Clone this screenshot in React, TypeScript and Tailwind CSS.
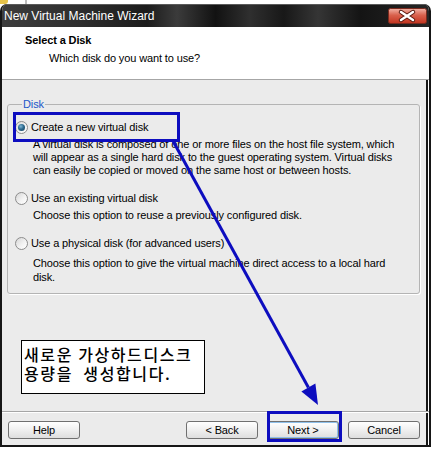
import React from "react";

function Radio({ checked }: { checked?: boolean }) {
	return (
		<span className="flex h-[13px] w-[13px] shrink-0 items-center justify-center rounded-full border border-[#8c8c8c] bg-[linear-gradient(135deg,#d6d6d6_0%,#f4f4f4_60%,#ffffff_100%)]">
			{checked && (
				<span className="h-[7px] w-[7px] rounded-full bg-[radial-gradient(circle_at_40%_35%,#7fb6d6_0%,#2d6a8e_45%,#163e58_100%)]" />
			)}
		</span>
	);
}

function Btn({ label, primary }: { label: string; primary?: boolean }) {
	return (
		<button
			className={
				"h-[18px] w-[72px] rounded-[3px] border border-[#707070] bg-[linear-gradient(180deg,#ffffff_0%,#f1f1f1_45%,#dedede_100%)] text-[11px] leading-[16px] text-black " +
				(primary ? "shadow-[inset_0_0_0_1px_#8fc0ea]" : "")
			}
		>
			{label}
		</button>
	);
}

export default function App() {
	return (
		<div className="relative h-[450px] w-[431px] overflow-hidden bg-white font-['Liberation_Sans',Arial,sans-serif] text-[11px] tracking-[-0.12px] text-black">
			{/* desktop behind the window */}
			<div className="flex h-[4px]">
				<div className="h-[4px] w-[8px] rounded-br-[3px] bg-[#e6c34a]" />
				<div className="ml-[17px] w-[2px] bg-[#bdbdbd]" />
			</div>

			{/* window */}
			<div className="w-[431px] overflow-hidden rounded-t-[7px] border-x-2 border-b-2 border-[#161616]">
				{/* title bar */}
				<div className="flex h-[23px] items-center justify-between bg-[linear-gradient(90deg,#3d3d3d_0%,#2e2e2e_18%,#1c1c1c_34%,#3b3b3b_41%,#121212_50%,#2f2f2f_58%,#181818_66%,#353535_74%,#141414_84%,#262626_100%)] pl-[2px] pr-[2px] shadow-[inset_0_1px_0_#5a5a5a]">
					<span className="text-[12px] tracking-normal text-white">New Virtual Machine Wizard</span>
					<svg width="39" height="16" viewBox="0 0 39 16">
						<defs>
							<linearGradient id="cl" x1="0" y1="0" x2="0" y2="1">
								<stop offset="0" stopColor="#f2b3a6" />
								<stop offset="0.45" stopColor="#d9604c" />
								<stop offset="1" stopColor="#c2341f" />
							</linearGradient>
						</defs>
						<rect x="0.5" y="0.5" width="38" height="15" rx="2" fill="url(#cl)" stroke="#7a2a1e" />
						<path d="M13 4 L25 12 M25 4 L13 12" stroke="#5a1a10" strokeWidth="4.5" strokeLinecap="round" />
						<path d="M13 4 L25 12 M25 4 L13 12" stroke="#ffffff" strokeWidth="2.5" strokeLinecap="round" />
					</svg>
				</div>

				{/* header */}
				<div className="h-[53px] border-b border-[#a6a6a6] bg-white pl-[23px] pt-[7px]">
					<div className="text-[11px] font-bold leading-[13px]">Select a Disk</div>
					<div className="mt-[5px] pl-[24px] leading-[13px]">Which disk do you want to use?</div>
				</div>

				{/* body */}
				<div className="flex h-[365px] flex-col bg-[#ebebeb] shadow-[inset_-1px_0_0_#ffffff,inset_-3px_0_0_#161616]">
					<fieldset className="ml-[5px] mt-[18px] w-[413px] rounded-[3px] border border-[#b4b4b4] pb-[9px] pl-[7px] shadow-[1px_1px_0_#ffffff]">
						<legend className="ml-[7px] px-[1px] leading-[13px] text-[#2157c9]">Disk</legend>

						<div className="mt-[10px] flex h-[13px] items-center gap-[3px] leading-[13px]">
							<Radio checked />
							<span>Create a new virtual disk</span>
						</div>
						<div className="mt-[4px] whitespace-nowrap pl-[18px] leading-[13px]">
							A virtual disk is composed of one or more files on the host file system, which
							<br />
							will appear as a single hard disk to the guest operating system. Virtual disks
							<br />
							can easily be copied or moved on the same host or between hosts.
						</div>

						<div className="mt-[15px] flex h-[13px] items-center gap-[3px] leading-[13px]">
							<Radio />
							<span>Use an existing virtual disk</span>
						</div>
						<div className="mt-[4px] pl-[18px] leading-[13px]">
							Choose this option to reuse a previously configured disk.
						</div>

						<div className="mt-[15px] flex h-[13px] items-center gap-[3px] leading-[13px]">
							<Radio />
							<span>Use a physical disk (for advanced users)</span>
						</div>
						<div className="mt-[6px] whitespace-nowrap pl-[18px] leading-[14px]">
							Choose this option to give the virtual machine direct access to a local hard
							<br />
							disk.
						</div>
					</fieldset>

					{/* footer */}
					<div className="mt-auto flex items-start border-t border-[#a6a6a6] pb-[6px] pr-[9px] pt-[9px] shadow-[inset_0_1px_0_#ffffff]">
						<div className="ml-[6px]">
							<Btn label="Help" />
						</div>
						<div className="ml-auto flex gap-[9px]">
							<Btn label="< Back" />
							<Btn label="Next >" primary />
							<Btn label="Cancel" />
						</div>
					</div>
				</div>
			</div>

			{/* annotation note */}
			<div className="absolute left-[21px] top-[340px] h-[54px] w-[184px] whitespace-pre border border-black bg-white pl-[2px] pt-[4px] font-['Noto_Sans_CJK_KR',sans-serif] text-[16px] font-medium leading-[19px] tracking-[1.6px]">
				{"새로운 가상하드디스크\n용량을  생성합니다."}
			</div>

			{/* highlight boxes */}
			<div className="absolute left-[13px] top-[112px] h-[30px] w-[167px] border-[3px] border-[#0d0dbf]" />
			<div className="absolute left-[267px] top-[411px] h-[31px] w-[75px] border-[3px] border-[#0d0dbf]" />

			{/* arrow */}
			<svg className="pointer-events-none absolute left-0 top-0" width="431" height="450">
				<line x1="173" y1="141" x2="308.4" y2="387.5" stroke="#0d0dbf" strokeWidth="3" />
				<polygon points="318,405 315.4,383.6 301.4,391.4" fill="#0d0dbf" />
			</svg>
		</div>
	);
}
